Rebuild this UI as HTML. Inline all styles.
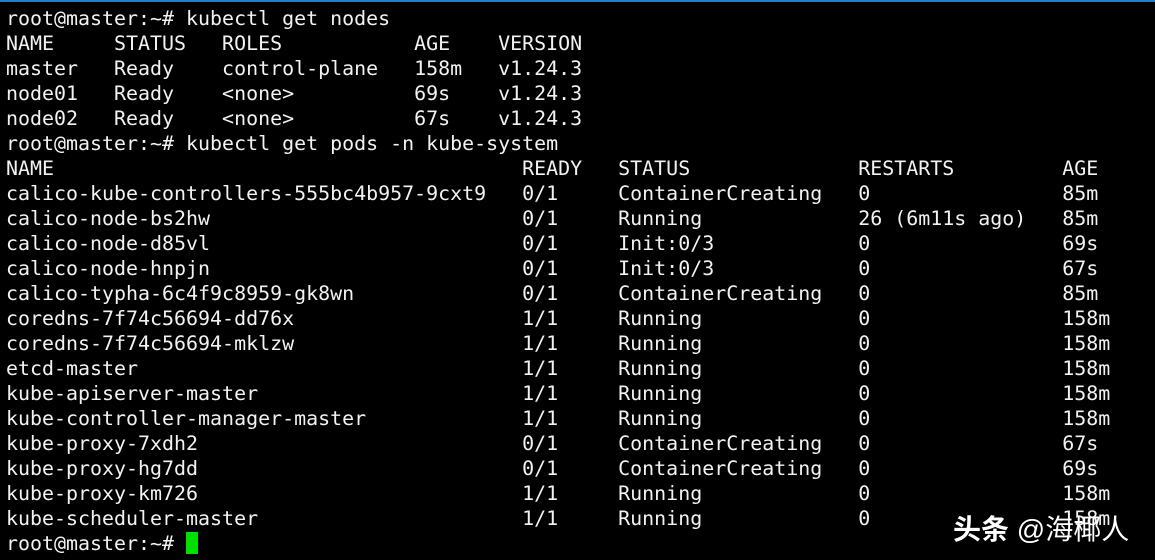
<!DOCTYPE html>
<html><head><meta charset="utf-8"><style>
html,body{margin:0;padding:0;background:#000;width:1155px;height:560px;overflow:hidden;position:relative}
.top{position:absolute;left:0;top:0;width:1155px;height:2px;background:#1e7fd6}
pre{margin:0;position:absolute;left:6px;top:6px;font-family:"DejaVu Sans Mono","Liberation Mono",monospace;font-size:19.95px;line-height:25px;color:#f2f2f2}
.cur{display:inline-block;width:12px;height:22px;background:#00e000;vertical-align:-4px}
.wm{position:absolute;left:953px;top:508px;font-family:"Liberation Sans","Noto Sans CJK SC",sans-serif;font-size:28px;color:#fff;font-weight:bold;white-space:nowrap}
.wm span{font-weight:normal}
</style></head><body>
<div class="top"></div>
<pre>root@master:~# kubectl get nodes
NAME     STATUS   ROLES           AGE    VERSION
master   Ready    control-plane   158m   v1.24.3
node01   Ready    &lt;none&gt;          69s    v1.24.3
node02   Ready    &lt;none&gt;          67s    v1.24.3
root@master:~# kubectl get pods -n kube-system
NAME                                       READY   STATUS              RESTARTS         AGE
calico-kube-controllers-555bc4b957-9cxt9   0/1     ContainerCreating   0                85m
calico-node-bs2hw                          0/1     Running             26 (6m11s ago)   85m
calico-node-d85vl                          0/1     Init:0/3            0                69s
calico-node-hnpjn                          0/1     Init:0/3            0                67s
calico-typha-6c4f9c8959-gk8wn              0/1     ContainerCreating   0                85m
coredns-7f74c56694-dd76x                   1/1     Running             0                158m
coredns-7f74c56694-mklzw                   1/1     Running             0                158m
etcd-master                                1/1     Running             0                158m
kube-apiserver-master                      1/1     Running             0                158m
kube-controller-manager-master             1/1     Running             0                158m
kube-proxy-7xdh2                           0/1     ContainerCreating   0                67s
kube-proxy-hg7dd                           0/1     ContainerCreating   0                69s
kube-proxy-km726                           1/1     Running             0                158m
kube-scheduler-master                      1/1     Running             0                158m
root@master:~# <span class="cur"></span></pre>
<div class="wm">头条 <span>@海椰人</span></div>
</body></html>
